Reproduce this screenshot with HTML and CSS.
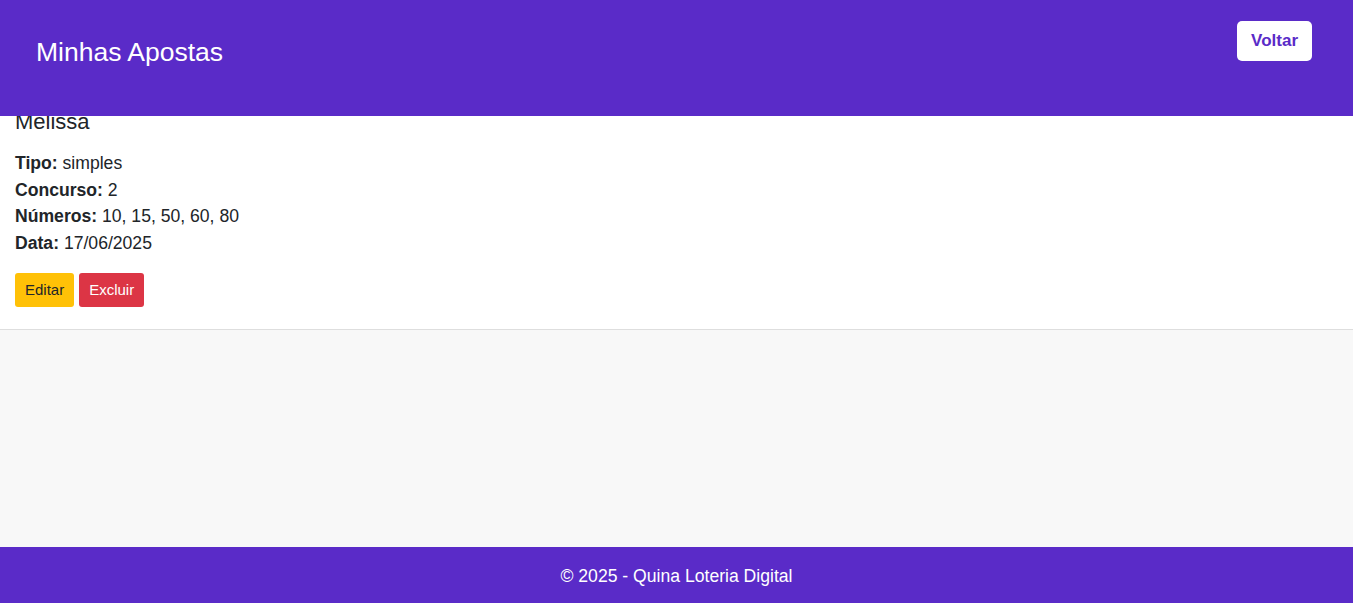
FILE: index.html
```html
<!DOCTYPE html>
<html lang="pt-BR">
<head>
<meta charset="utf-8">
<title>Minhas Apostas</title>
<link rel="stylesheet" href="styles.css">
</head>
<body>
<header class="topbar">
  <h1 class="topbar-title">Minhas Apostas</h1>
  <a class="btn-back" href="#">Voltar</a>
</header>
<main class="content">
  <section class="bet-card">
    <h5 class="bet-name">Melissa</h5>
    <p class="bet-line"><strong>Tipo:</strong> simples</p>
    <p class="bet-line"><strong>Concurso:</strong> 2</p>
    <p class="bet-line"><strong>Números:</strong> 10, 15, 50, 60, 80</p>
    <p class="bet-line"><strong>Data:</strong> 17/06/2025</p>
    <div class="bet-actions">
      <button class="btn btn-edit">Editar</button>
      <button class="btn btn-delete">Excluir</button>
    </div>
  </section>
</main>
<footer class="footer">© 2025 - Quina Loteria Digital</footer>
</body>
</html>
```

FILE: styles.css
```css
* { box-sizing: border-box; }
html, body { margin: 0; padding: 0; }
body {
  font-family: "Liberation Sans", Arial, sans-serif;
  color: #212529;
  background: #f8f8f8;
  min-height: 100vh;
  display: flex;
  flex-direction: column;
}
.topbar {
  position: fixed;
  top: 0; left: 0; right: 0;
  height: 116px;
  background: #5a2bc8;
  display: flex;
  justify-content: space-between;
  align-items: flex-start;
  padding: 21px 41px 0 36px;
  z-index: 10;
}
.topbar-title {
  margin: 16px 0 0 0;
  font-size: 26.5px;
  font-weight: normal;
  line-height: 1.2;
  color: #fff;
}
.btn-back {
  display: inline-block;
  background: #fff;
  color: #5a2bc8;
  font-weight: bold;
  font-size: 17px;
  line-height: 24px;
  padding: 8px 14px;
  border-radius: 5px;
  text-decoration: none;
}
.content {
  flex: 1;
  padding-top: 94px;
}
.bet-card {
  background: #fff;
  padding: 15px 15px 22px 15px;
  border-bottom: 1px solid #dedede;
}
.bet-name {
  margin: 0 0 15px 0;
  font-size: 22px;
  font-weight: normal;
  line-height: 1.2;
}
.bet-line {
  margin: 0;
  font-size: 17.6px;
  line-height: 26.4px;
}
.bet-actions {
  margin-top: 17px;
  display: flex;
  gap: 5px;
}
.btn {
  font-family: inherit;
  font-size: 15px;
  line-height: 22px;
  padding: 6px 10px;
  border: none;
  border-radius: 3px;
}
.btn-edit { background: #ffc107; color: #212529; }
.btn-delete { background: #dc3545; color: #fff; }
.footer {
  height: 56px;
  background: #5a2bc8;
  color: #fff;
  font-size: 17.6px;
  padding-top: 2px;
  display: flex;
  align-items: center;
  justify-content: center;
}
```
